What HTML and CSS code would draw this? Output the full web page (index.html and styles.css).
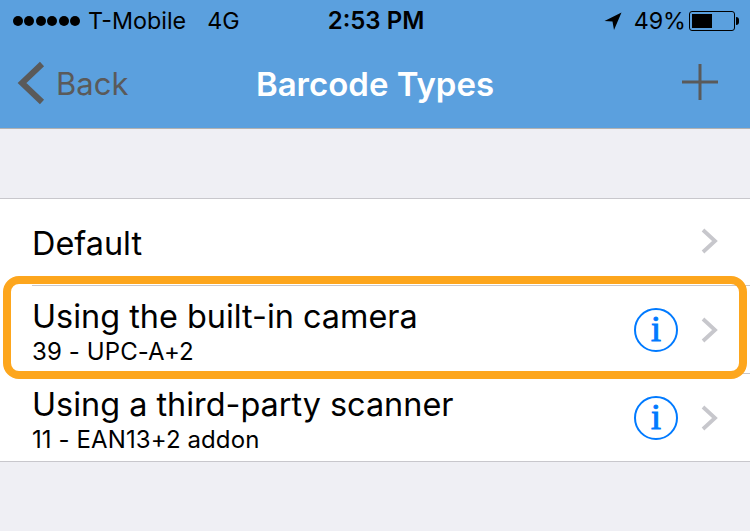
FILE: index.html
```html
<!DOCTYPE html>
<html lang="en">
<head>
    <meta charset="UTF-8">
    <title>Barcode Types</title>
    <link rel="stylesheet" href="styles.css">
</head>
<body>
    <header class="top-bar">
        <div class="status-bar">
            <div class="status-left">
                <span class="signal"><i></i><i></i><i></i><i></i><i></i><i></i></span>
                <span class="carrier">T-Mobile</span>
                <span class="network">4G</span>
            </div>
            <div class="clock">2:53 PM</div>
            <div class="status-right">
                <svg class="arrow" width="18" height="18" viewBox="0 0 18 18"><path d="M17.500 0.500 L0.500 9 L8.500 9.500 L10 18 Z" fill="#000"/></svg>
                <span class="battery-text">49%</span>
                <span class="battery"><span class="battery-level"></span></span>
                <span class="battery-tip"></span>
            </div>
        </div>
        <nav class="nav-bar">
            <div class="back">
                <svg width="28" height="44" viewBox="0 0 28 44"><path d="M25 3 L5 22 L25 41" fill="none" stroke="#5a5a5a" stroke-width="6"/></svg>
                <span>Back</span>
            </div>
            <div class="title">Barcode Types</div>
            <svg class="plus" width="36" height="36" viewBox="0 0 36 36"><path d="M18 0 V36 M0 18 H36" stroke="#5a5a5a" stroke-width="3"/></svg>
        </nav>
    </header>

    <ul class="list">
        <li class="row">
            <div class="row-text"><div class="row-title">Default</div></div>
            <svg class="chevron" width="18" height="26" viewBox="0 0 18 26"><path d="M2 2 L14 13 L2 24" fill="none" stroke="#c7c7cc" stroke-width="3.800"/></svg>
        </li>
        <li class="row">
            <div class="row-text">
                <div class="row-title">Using the built-in camera</div>
                <div class="row-sub">39 - UPC-A+2</div>
            </div>
            <span class="info">i</span>
            <svg class="chevron" width="18" height="26" viewBox="0 0 18 26"><path d="M2 2 L14 13 L2 24" fill="none" stroke="#c7c7cc" stroke-width="3.800"/></svg>
        </li>
        <li class="row">
            <div class="row-text">
                <div class="row-title">Using a third-party scanner</div>
                <div class="row-sub">11 - EAN13+2 addon</div>
            </div>
            <span class="info">i</span>
            <svg class="chevron" width="18" height="26" viewBox="0 0 18 26"><path d="M2 2 L14 13 L2 24" fill="none" stroke="#c7c7cc" stroke-width="3.800"/></svg>
        </li>
    </ul>

    <div class="highlight"></div>
</body>
</html>
```

FILE: styles.css
```css
* {
    box-sizing: border-box;
}
html, body {
    height: 100%;
}
body {
    margin: 0;
    position: relative;
    overflow: hidden;
    background-color: #efeff4;
    font-family: Inter, "Liberation Sans", sans-serif;
    color: #000;
}
.top-bar {
    height: 129px;
    background-color: #5ba0de;
    border-bottom: 1px solid #b2b2b2;
}
.status-bar {
    height: 40px;
    padding: 1px 11px 0 13px;
    display: grid;
    grid-template-columns: 1fr auto 1fr;
    align-items: center;
    font-size: 23.300px;
}
.status-left {
    display: flex;
    align-items: center;
}
.signal {
    display: flex;
    gap: 1.400px;
    margin-right: 8px;
}
.signal i {
    width: 10px;
    height: 10px;
    border-radius: 50%;
    background-color: #000;
}
.carrier {
    margin-right: 21px;
}
.clock {
    font-size: 24px;
    font-weight: 600;
}
.status-right {
    display: flex;
    align-items: center;
    justify-content: flex-end;
}
.arrow {
    margin-right: 12px;
}
.battery-text {
    margin-right: 3px;
}
.battery {
    width: 46px;
    height: 20px;
    padding: 2px;
    border: 1px solid #000;
    border-radius: 3px;
}
.battery-level {
    display: block;
    width: 20px;
    height: 100%;
    background-color: #000;
}
.battery-tip {
    width: 3px;
    height: 8px;
    margin-left: 1px;
    background-color: #000;
    border-radius: 0 3px 3px 0;
}
.nav-bar {
    height: 88px;
    padding: 0 17px 2px;
    display: grid;
    grid-template-columns: 1fr auto 1fr;
    align-items: center;
}
.back {
    display: flex;
    align-items: center;
    gap: 11px;
    color: #5a5a5a;
    font-size: 31px;
}
.title {
    padding-top: 2px;
    color: #fff;
    font-size: 33px;
    font-weight: 600;
}
.plus {
    justify-self: end;
    margin: 0 15px 2px 0;
}
.list {
    margin: 69px 0 0;
    padding: 0 0 0 32px;
    list-style: none;
    background-color: #fff;
    border-top: 1px solid #c8c7cc;
    border-bottom: 1px solid #c8c7cc;
}
.row {
    height: 88px;
    padding-right: 31px;
    display: flex;
    align-items: center;
    border-top: 1px solid #c8c7cc;
}
.row:first-child {
    height: 86px;
    border-top: none;
}
.row:first-child .row-text {
    padding-top: 3px;
}
.row:first-child .chevron {
    margin-bottom: 3px;
}
.row-text {
    flex: 1;
    padding-top: 5px;
}
.row-title {
    font-size: 32.400px;
    line-height: 36px;
}
.row-sub {
    margin-top: 3px;
    font-size: 24px;
    line-height: 28px;
    letter-spacing: 0.100px;
}
.info {
    width: 44px;
    height: 44px;
    margin-right: 23px;
    padding-bottom: 2px;
    display: flex;
    align-items: center;
    justify-content: center;
    border: 2px solid #007aff;
    border-radius: 50%;
    color: #007aff;
    font-family: "Liberation Serif", serif;
    font-size: 36px;
    -webkit-text-stroke: 1px #007aff;
}
.chevron {
    flex: none;
}
.highlight {
    position: absolute;
    left: 3px;
    top: 276px;
    width: 744px;
    height: 103px;
    border: 8px solid #fda61d;
    border-radius: 16px;
}
```
